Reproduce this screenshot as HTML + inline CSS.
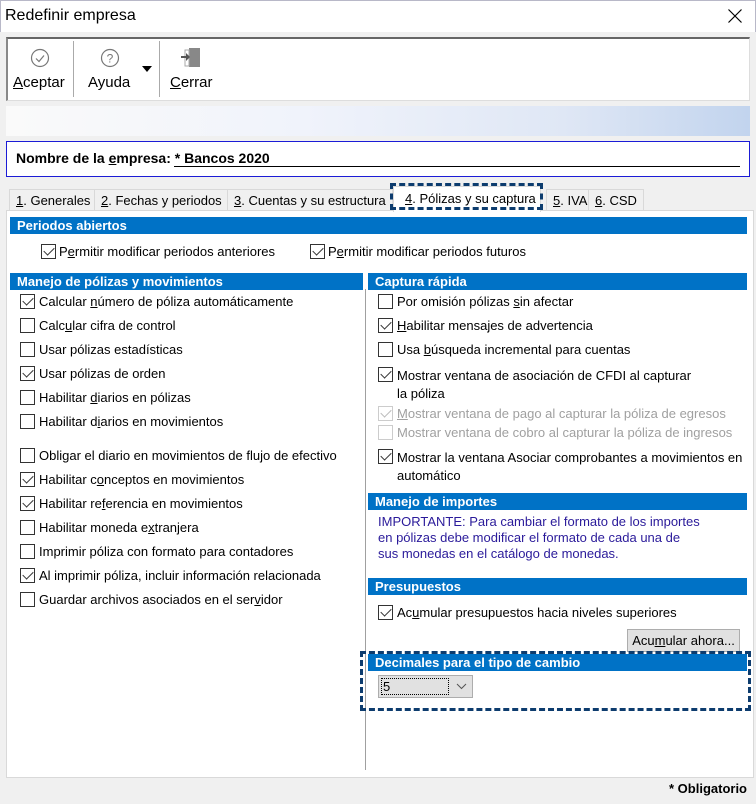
<!DOCTYPE html>
<html><head><meta charset="utf-8"><style>
*{margin:0;padding:0;box-sizing:border-box}
body{width:756px;height:804px;background:#f0f0f0;font-family:"Liberation Sans",sans-serif;font-size:13px;color:#000;position:relative;overflow:hidden}
.a{position:absolute;white-space:nowrap}
.hdr{position:absolute;background:#0072c6;color:#fff;font-weight:bold;font-size:13px;height:17px;line-height:17px;padding-left:7px}
.cb{position:absolute;width:15px;height:15px;border:1px solid #333;background:#fff}
.cb.c::after{content:"";position:absolute;left:4px;top:0px;width:5px;height:9px;border:solid #333;border-width:0 1.5px 1.5px 0;transform:rotate(45deg)}
.cb.d{border-color:#ccc}.cb.d.c::after{border-color:#bbb}
.lb{position:absolute;white-space:nowrap;line-height:16px}
.g{color:#a0a0a0}
u{text-decoration:underline}
.tab{position:absolute;top:189px;height:21px;line-height:21px;background:#f0f0f0;border:1px solid #d9d9d9;border-bottom:none;padding:0 6px;font-size:13px}
</style></head><body>
<div class="a" style="left:0;top:0;width:756px;height:32px;background:#fff;border:1px solid #b8b8c8;border-bottom:none"></div>
<div class="a" style="left:5px;top:7px;font-size:16px">Redefinir empresa</div>
<svg class="a" style="left:728px;top:9px" width="14" height="14"><path d="M0.5 0.5L13.5 13.5M13.5 0.5L0.5 13.5" stroke="#000" stroke-width="1.2"/></svg>
<!-- toolbar -->
<div class="a" style="left:6px;top:37px;width:744px;height:64px;background:#fff;border:1px solid #ddd;border-top:2px solid #666;border-left:2px solid #888"></div>
<svg class="a" style="left:30px;top:48px" width="20" height="20"><circle cx="10" cy="10" r="8.5" fill="none" stroke="#777" stroke-width="1.2"/><path d="M6 10.5l3 3 5-6" fill="none" stroke="#777" stroke-width="1.2"/></svg>
<div class="a" style="left:13px;top:74px;font-size:15px"><u>A</u>ceptar</div>
<div class="a" style="left:73px;top:41px;width:1px;height:56px;background:#aaa"></div>
<svg class="a" style="left:100px;top:48px" width="20" height="20"><circle cx="10" cy="10" r="8.5" fill="none" stroke="#777" stroke-width="1.2"/><text x="10" y="14.5" text-anchor="middle" font-size="12" fill="#777" font-family="Liberation Sans">?</text></svg>
<div class="a" style="left:88px;top:74px;font-size:15px">Ayuda</div>
<div class="a" style="left:142px;top:66px;width:0;height:0;border-left:5px solid transparent;border-right:5px solid transparent;border-top:6px solid #000"></div>
<div class="a" style="left:159px;top:41px;width:1px;height:56px;background:#aaa"></div>
<svg class="a" style="left:180px;top:47px" width="22" height="22"><rect x="9" y="1" width="11" height="19" fill="#888"/><rect x="5" y="3" width="4" height="16" fill="none" stroke="#aaa"/><path d="M1 9h5v-3l4 4-4 4v-3H1z" fill="#555"/></svg>
<div class="a" style="left:170px;top:74px;font-size:15px"><u>C</u>errar</div>
<!-- gradient -->
<div class="a" style="left:6px;top:106px;width:744px;height:30px;background:linear-gradient(90deg,#fafafa,#f0f3fb 40%,#dfe7f5 75%,#c2d4ee)"></div>
<!-- name -->
<div class="a" style="left:6px;top:141px;width:744px;height:36px;background:#fff;border:1px solid #1b1bd6"></div>
<div class="a" style="left:16px;top:150px;font-weight:bold;font-size:14px">Nombre de la <u>e</u>mpresa: * Bancos 2020</div>
<div class="a" style="left:174px;top:166px;width:566px;height:1px;background:#000"></div>
<!-- tabs -->
<div class="tab" style="left:9px"><u>1</u>. Generales</div>
<div class="tab" style="left:94px"><u>2</u>. Fechas y periodos</div>
<div class="tab" style="left:227px"><u>3</u>. Cuentas y su estructura</div>
<div class="tab" style="left:546px;padding:0 6px"><u>5</u>. IVA</div>
<div class="tab" style="left:588px"><u>6</u>. CSD</div>
<div class="a" style="left:6px;top:210px;width:748px;height:568px;background:#fff;border:1px solid #d9d9d9"></div>
<div class="a" style="left:393px;top:186px;width:148px;height:26px;background:#fff;border:1px solid #d9d9d9;border-bottom:none;line-height:24px;padding-left:11px"><u>4</u>. Pólizas y su captura</div>
<div class="a" style="left:390px;top:183px;width:153px;height:27px;border:3px dashed #0d3c6e"></div>
<!-- periodos -->
<div class="hdr" style="left:10px;top:217px;width:737px">Periodos abiertos</div>
<div class="cb c" style="left:41px;top:244px"></div><div class="lb" style="left:59px;top:244px">P<u>e</u>rmitir modificar periodos anteriores</div>
<div class="cb c" style="left:310px;top:244px"></div><div class="lb" style="left:328px;top:244px">P<u>e</u>rmitir modificar periodos futuros</div>
<!-- left -->
<div class="hdr" style="left:10px;top:273px;width:353px">Manejo de pólizas y movimientos</div>
<div class="cb c" style="left:20px;top:294px"></div><div class="lb" style="left:39px;top:294px">Calcular <u>n</u>úmero de póliza automáticamente</div>
<div class="cb" style="left:20px;top:318px"></div><div class="lb" style="left:39px;top:318px">Calc<u>u</u>lar cifra de control</div>
<div class="cb" style="left:20px;top:342px"></div><div class="lb" style="left:39px;top:342px">Usar pólizas estadísticas</div>
<div class="cb c" style="left:20px;top:366px"></div><div class="lb" style="left:39px;top:366px">Usar pólizas de orden</div>
<div class="cb" style="left:20px;top:390px"></div><div class="lb" style="left:39px;top:390px">Habilitar <u>d</u>iarios en pólizas</div>
<div class="cb" style="left:20px;top:414px"></div><div class="lb" style="left:39px;top:414px">Habilitar d<u>i</u>arios en movimientos</div>
<div class="cb" style="left:20px;top:448px"></div><div class="lb" style="left:39px;top:448px">Obligar el diario en movimientos de flujo de efectivo</div>
<div class="cb c" style="left:20px;top:472px"></div><div class="lb" style="left:39px;top:472px">Habilitar c<u>o</u>nceptos en movimientos</div>
<div class="cb c" style="left:20px;top:496px"></div><div class="lb" style="left:39px;top:496px">Habilitar re<u>f</u>erencia en movimientos</div>
<div class="cb" style="left:20px;top:520px"></div><div class="lb" style="left:39px;top:520px">Habilitar moneda e<u>x</u>tranjera</div>
<div class="cb" style="left:20px;top:544px"></div><div class="lb" style="left:39px;top:544px">Imprimir póliza con formato para contadores</div>
<div class="cb c" style="left:20px;top:568px"></div><div class="lb" style="left:39px;top:568px">Al imprimir póliza, incluir información relacionada</div>
<div class="cb" style="left:20px;top:592px"></div><div class="lb" style="left:39px;top:592px">Guardar archivos asociados en el ser<u>v</u>idor</div>
<div class="a" style="left:365px;top:289px;width:1px;height:481px;background:#a0a0a0"></div>
<!-- right -->
<div class="hdr" style="left:368px;top:273px;width:379px">Captura rápida</div>
<div class="cb" style="left:378px;top:294px"></div><div class="lb" style="left:397px;top:294px">Por omisión pólizas <u>s</u>in afectar</div>
<div class="cb c" style="left:378px;top:318px"></div><div class="lb" style="left:397px;top:318px"><u>H</u>abilitar mensajes de advertencia</div>
<div class="cb" style="left:378px;top:342px"></div><div class="lb" style="left:397px;top:342px">Usa <u>b</u>úsqueda incremental para cuentas</div>
<div class="cb c" style="left:378px;top:367px"></div><div class="lb" style="left:397px;top:367px;line-height:18px">Mostrar ventana de asociación de CFDI al capturar<br>la póliza</div>
<div class="cb d c" style="left:378px;top:406px"></div><div class="lb g" style="left:397px;top:406px"><u>M</u>ostrar ventana de pago al capturar la póliza de egresos</div>
<div class="cb d" style="left:378px;top:425px"></div><div class="lb g" style="left:397px;top:425px">Mostrar ventana de cobro al capturar la póliza de ingresos</div>
<div class="cb c" style="left:378px;top:449px"></div><div class="lb" style="left:397px;top:449px;line-height:18px">Mostrar la ventana Asociar comprobantes a movimientos en<br>automático</div>
<div class="hdr" style="left:368px;top:493px;width:379px">Manejo de importes</div>
<div class="lb" style="left:378px;top:514px;color:#2a1a9a">IMPORTANTE: Para cambiar el formato de los importes<br>en pólizas debe modificar el formato de cada una de<br>sus monedas en el catálogo de monedas.</div>
<div class="hdr" style="left:368px;top:578px;width:379px">Presupuestos</div>
<div class="cb c" style="left:378px;top:605px"></div><div class="lb" style="left:397px;top:605px">Ac<u>u</u>mular presupuestos hacia niveles superiores</div>
<div class="a" style="left:627px;top:629px;width:113px;height:23px;background:#e1e1e1;border:1px solid #adadad;line-height:21px;text-align:center">Acu<u>m</u>ular ahora...</div>
<div class="hdr" style="left:368px;top:654px;width:379px">Decimales para el tipo de cambio</div>
<div class="a" style="left:378px;top:675px;width:95px;height:23px;background:#e1e1e1;border:1px solid #adadad"></div>
<div class="a" style="left:381px;top:678px;width:68px;height:17px;border:1px dotted #000;line-height:15px;padding-left:1px">5</div>
<svg class="a" style="left:456px;top:683px" width="11" height="7"><path d="M1 1l4.5 4.5L10 1" fill="none" stroke="#555"/></svg>
<div class="a" style="left:360px;top:651px;width:391px;height:60px;border:3px dashed #0d3c6e"></div>
<div class="a" style="left:669px;top:781px;font-weight:bold">* Obligatorio</div>
</body></html>
